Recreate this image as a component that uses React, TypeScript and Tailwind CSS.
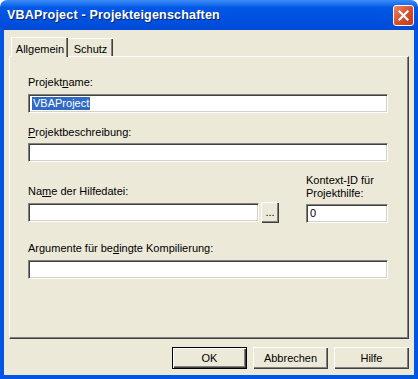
import React from 'react';

const font = { fontFamily: '"Liberation Sans", Arial, sans-serif' };

// classic sunken edit box
const Field: React.FC<{ className?: string; children?: React.ReactNode }> = ({ className = '', children }) => (
  <div
    className={`h-[19px] bg-white border border-t-[#808080] border-l-[#808080] border-b-white border-r-white shadow-[inset_1px_1px_0_#404040,inset_-1px_-1px_0_#d4d0c8] flex items-center pl-[3px] ${className}`}
  >
    {children}
  </div>
);

const Btn: React.FC<{ label: string; isDefault?: boolean }> = ({ label, isDefault }) => (
  <div
    className={`w-[75px] h-[22px] flex items-center justify-center text-[11px] text-black bg-[#ece9d8] ${
      isDefault
        ? 'border border-black shadow-[inset_1px_1px_0_#fff,inset_-1px_-1px_0_#404040,inset_-2px_-2px_0_#808080]'
        : 'shadow-[inset_1px_1px_0_#fff,inset_-1px_-1px_0_#404040,inset_-2px_-2px_0_#808080]'
    }`}
  >
    {label}
  </div>
);

export default function App() {
  return (
    <div className="w-[418px] h-[379px] bg-white flex flex-col select-none" style={font}>
      {/* Title bar */}
      <div className="h-[30px] rounded-t-[7px] bg-gradient-to-b from-[#3b8cf7] via-[#0058e6] via-25% to-[#004ad8] flex items-center justify-between pl-[7px] pr-[4px] shrink-0">
        <span className="text-white font-bold text-[12.5px] tracking-[0.2px] [text-shadow:1px_1px_0_#0a246a]">
          VBAProject - Projekteigenschaften
        </span>
        <div className="w-[21px] h-[21px] rounded-[3px] border border-white bg-gradient-to-br from-[#e9856a] via-[#d8512d] to-[#c0391b] flex items-center justify-center">
          <svg width="11" height="11" viewBox="0 0 11 11">
            <path d="M1.5 1.5 L9.5 9.5 M9.5 1.5 L1.5 9.5" stroke="#fff" strokeWidth="2.2" strokeLinecap="square" />
          </svg>
        </div>
      </div>

      {/* Client area */}
      <div className="flex-1 flex flex-col bg-[#ece9d8] border-x-4 border-b-4 border-[#0055e5] px-[5px] pt-[7px]">
        {/* Tabs */}
        <div className="flex items-end h-[20px] pl-[2px] relative z-10 -mb-px">
          <div className="w-[57px] h-[20px] bg-[#ece9d8] border-t border-l border-white shadow-[inset_-1px_0_0_#404040,inset_-2px_0_0_#808080] flex items-start justify-center pt-[3px] text-[11px] text-black">
            Allgemein
          </div>
          <div className="w-[45px] h-[18px] mb-[1px] bg-[#ece9d8] border-t border-white shadow-[inset_-1px_0_0_#404040,inset_-2px_0_0_#808080] flex items-start justify-center pt-[2px] text-[11px] text-black">
            Schutz
          </div>
        </div>

        {/* Tab panel */}
        <div className="w-[400px] h-[283px] border-t border-l border-white border-r border-r-[#404040] border-b border-b-[#404040] shadow-[inset_-1px_-1px_0_#808080] flex flex-col pl-[18px] pt-[19px] text-[11px] text-black leading-[13px]">
          <div>
            Projekt<span className="underline">n</span>ame:
          </div>
          <Field className="mt-[5px] w-[360px]">
            <span className="bg-[#316ac5] text-white leading-[13px] px-px">VBAProject</span>
          </Field>

          <div className="mt-[13px]">
            <span className="underline">P</span>rojektbeschreibung:
          </div>
          <Field className="mt-[4px] w-[360px]" />

          <div className="mt-[12px] flex items-end">
            <div className="flex flex-col">
              <div>
                Na<span className="underline">m</span>e der Hilfedatei:
              </div>
              <div className="mt-[4px] flex items-center gap-[2px]">
                <Field className="w-[231px]" />
                <div className="w-[18px] h-[21px] bg-[#ece9d8] shadow-[inset_1px_1px_0_#fff,inset_-1px_-1px_0_#404040,inset_-2px_-2px_0_#808080] flex items-end justify-center pb-[5px] leading-none">
                  ...
                </div>
              </div>
            </div>
            <div className="flex flex-col ml-[27px]">
              <div>
                Kontext-<span className="underline">I</span>D für
                <br />
                Projekthilfe:
              </div>
              <Field className="mt-[4px] w-[82px]">0</Field>
            </div>
          </div>

          <div className="mt-[19px]">
            Argumente für be<span className="underline">d</span>ingte Kompilierung:
          </div>
          <Field className="mt-[5px] w-[360px]" />
        </div>

        {/* Buttons */}
        <div className="flex justify-end gap-[6px] mt-[8px]">
          <Btn label="OK" isDefault />
          <Btn label="Abbrechen" />
          <Btn label="Hilfe" />
        </div>
      </div>
    </div>
  );
}
